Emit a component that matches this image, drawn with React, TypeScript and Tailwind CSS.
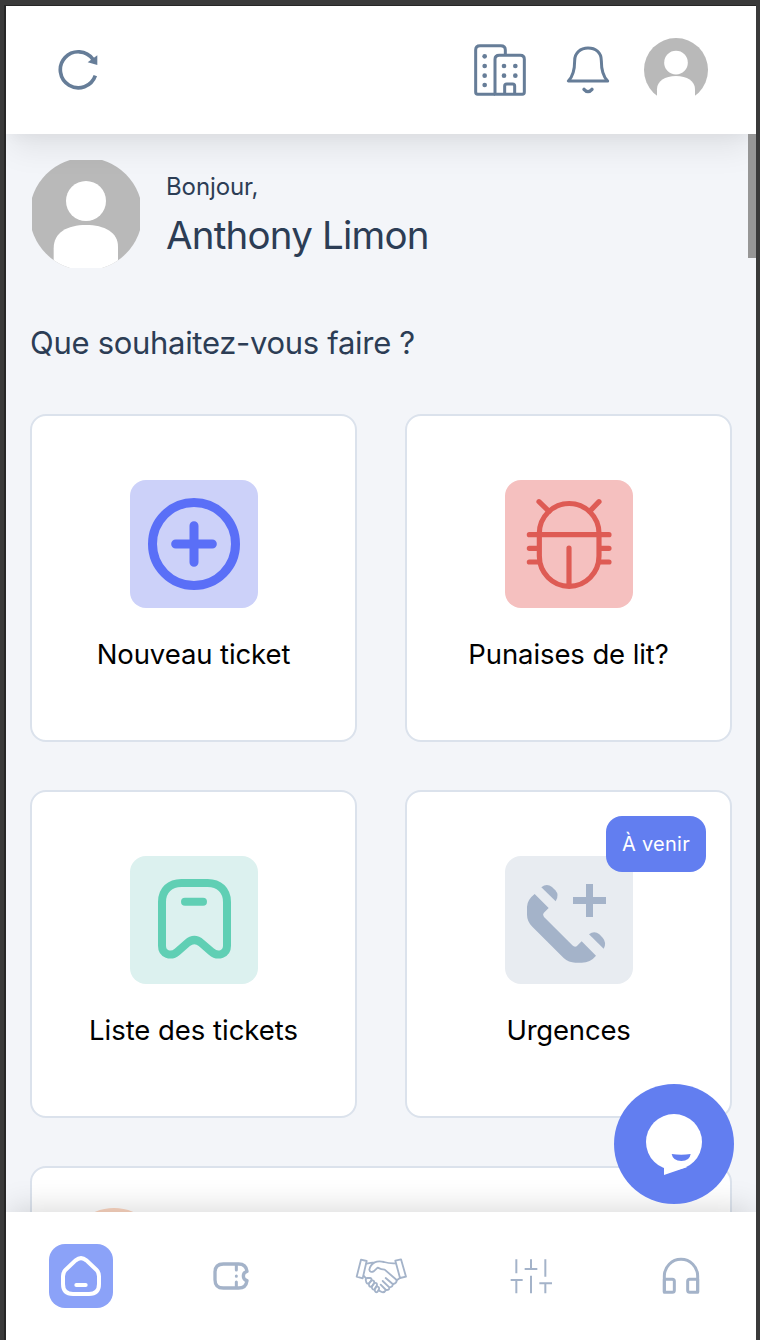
import type { ReactNode } from 'react';

function Art({ box, w, h, children }: { box: string; w: number; h: number; children: ReactNode }) {
  return (
    <svg viewBox={box} width={w} height={h} fill="none" className="block shrink-0" aria-hidden="true">
      {children}
    </svg>
  );
}

const RefreshIcon = () => (
  <Art box="174 147 120 126" w={40} h={42}>
    <path d="M286 227A54 54 0 1 1 279 178" stroke="#667d98" strokeWidth="11" />
    <path d="M292 166V195L263 187Z" fill="#667d98" />
  </Art>
);

const BuildingIcon = () => (
  <Art box="42 69 156 162" w={52} h={54}>
    <g stroke="#667d98" strokeWidth="9" strokeLinejoin="round">
      <path d="M136 103V90Q136 77 122 77H60Q47 77 47 90V216Q47 223 53 223H105" />
      <path d="M105 223V118Q105 106 118 106H181Q193 106 193 118V216Q193 223 187 223H105Z" />
      <path d="M134 223V198Q134 192 140 192H158Q164 192 164 198V223" />
    </g>
    <g fill="#667d98">
      <circle cx="74" cy="109" r="7" /><circle cx="74" cy="138" r="7" />
      <circle cx="74" cy="167" r="7" /><circle cx="74" cy="195" r="7" />
      <circle cx="132" cy="138" r="7" /><circle cx="166" cy="138" r="7" />
      <circle cx="132" cy="167" r="7" /><circle cx="166" cy="167" r="7" />
    </g>
  </Art>
);

const BellIcon = () => (
  <Art box="318 75 132 150" w={44} h={50}>
    <g stroke="#667d98" strokeWidth="9" strokeLinejoin="round">
      <path d="M325 183H443C430 170 424 152 424 122C424 96 406 84 384 84C362 84 344 98 344 122C344 152 338 170 325 183Z" />
      <path d="M372 208Q384 222 396 208" strokeWidth="10" strokeLinecap="round" />
    </g>
  </Art>
);

const HeaderAvatar = () => (
  <Art box="552 54 192 192" w={64} h={64}>
    <circle cx="648" cy="150" r="96" fill="#b9b9b9" />
    <circle cx="648" cy="128" r="35.5" fill="#fff" />
    <path d="M591 246V208C591 183 615 168 648 168S705 183 705 208V246Z" fill="#fff" />
  </Art>
);

const LargeAvatar = () => (
  <Art box="66 60 324 324" w={108} h={108}>
    <defs>
      <clipPath id="avatar-round"><circle cx="228" cy="222" r="169" /></clipPath>
    </defs>
    <g clipPath="url(#avatar-round)">
      <rect x="50" y="50" width="360" height="350" fill="#b9b9b9" />
      <circle cx="228" cy="183" r="60" fill="#fff" />
      <path d="M131 390V325C131 277 172 255 228 255S324 277 324 320V390Z" fill="#fff" />
    </g>
  </Art>
);

const PlusIcon = () => (
  <Art box="30 30 384 384" w={128} h={128}>
    <g stroke="#5a6ff7" strokeWidth="27" strokeLinecap="round">
      <circle cx="222" cy="222" r="124.5" />
      <path d="M167 222H277M222 167V277" />
    </g>
  </Art>
);

const BugIcon = () => (
  <Art box="30 30 384 384" w={128} h={128}>
    <g stroke="#de5b54" strokeWidth="15.5" strokeLinecap="round">
      <path d="M133 258V190A89.500 89.500 0 0 1 312 190V258A89.500 91 0 0 1 133 258Z" />
      <path d="M103 194H342M103 235H127M103 276H127M318 235H342M318 276H342M132 95L162 124M312 95L284 124M222 234V345" />
    </g>
  </Art>
);

const TicketsIcon = () => (
  <Art box="30 30 384 384" w={128} h={128}>
    <g stroke="#60cfb4" strokeWidth="24" strokeLinecap="round">
      <path d="M126 299V168C126 132 150 111 184 111H263C297 111 321 132 321 168V299C321 324 294 334 274 317L244 291C230 279 216 279 202 291L172 317C152 334 126 324 126 299Z" />
      <path d="M195 167H249" />
    </g>
  </Art>
);

const EmergencyIcon = () => (
  <Art box="30 150 384 384" w={128} h={128}>
    <g fill="#a4b3c9">
      <path d="M119 264L161 306L146 321Q142 326 147 333L232 418Q238 424 245 421L260 406L303 449Q286 470 260 470H241Q221 470 206 456L112 362Q96 346 96 326V302Q97 281 119 264Z" />
      <path d="M139 244Q155 230 171 243L181 253Q194 267 182 286Z" />
      <path d="M282 385Q298 372 313 385L323 395Q336 410 326 428Z" />
      <path d="M273 234H294V273H333V294H294V333H273V294H234V273H273Z" />
    </g>
  </Art>
);

const HomeIcon = () => (
  <Art box="147 282 192 192" w={64} h={64}>
    <g stroke="#fff" strokeWidth="12" strokeLinecap="round">
      <path d="M189 379Q189 367 197 359L227 331Q243 318 259 331L289 359Q297 367 297 379V402Q297 432 267 432H219Q189 432 189 402Z" />
      <path d="M229 405H257" />
    </g>
  </Art>
);

const TicketIcon = () => (
  <Art box="636 333 114 90" w={38} h={30}>
    <g stroke="#a4b3c9" strokeWidth="10" strokeLinecap="round" strokeLinejoin="round">
      <path d="M670 342H716Q738 342 741 364Q730 367 730 378T741 392Q738 414 716 414H670Q645 414 645 389V367Q645 342 670 342Z" />
      <path d="M709 344V360M709 378V378.500M709 396V412" strokeWidth="9" />
    </g>
  </Art>
);

const HandshakeIcon = () => (
  <Art box="45 81 156 114" w={52} h={38}>
    <g stroke="#a4b3c9" strokeWidth="5.500" strokeLinecap="round" strokeLinejoin="round">
      <path d="M63 89L80 93L68 145L50 140Z" />
      <path d="M166 92L183 88L198 140L180 144Z" />
      <path d="M80 101Q92 98 104 97M166 100Q148 101 132 96Q116 92 104 97Q91 104 88 119Q90 129 101 124L113 113Q124 119 134 119L170 150Q171 159 160 162" />
      <path d="M72 138L78 145M180 144L170 151" />
      <path d="M78 153Q75 146 82 144L90 144Q97 146 94 152L87 160Q79 163 78 153Z" />
      <path d="M87 160L94 152Q103 149 103 158L95 170Q85 172 87 160Z" />
      <path d="M95 170L103 159Q112 157 111 166L104 178Q96 181 95 170Z" />
      <path d="M104 178L110 169Q119 170 117 178L112 186Q106 189 104 180Z" />
      <path d="M137 144L158 162Q159 171 148 172L128 153M148 172Q149 181 138 180L122 164M138 180Q133 189 125 186L116 181" />
    </g>
  </Art>
);

const SlidersIcon = () => (
  <Art box="510 84 126 108" w={42} h={36}>
    <path
      d="M529 88V130M512 150H548M529 150V190M573 88V117M554 117H592M573 137V190M616 88V140M598 160H636M616 160V190"
      stroke="#a4b3c9"
      strokeWidth="6"
    />
  </Art>
);

const HeadphonesIcon = () => (
  <Art box="66 81 114 114" w={38} h={38}>
    <g stroke="#a4b3c9" strokeWidth="9" strokeLinejoin="round">
      <path d="M73 187V138A50 50 0 0 1 173 138V187" />
      <path d="M73 148H97Q103 148 103 154V181Q103 187 97 187H73ZM173 148H149Q143 148 143 154V181Q143 187 149 187H173Z" />
    </g>
  </Art>
);

function ActionCard({ icon, tile, label, labelClass, badge }: {
  icon: ReactNode; tile: string; label: string; labelClass: string; badge?: string;
}) {
  return (
    <button className="relative flex h-[328px] flex-col items-center rounded-[16px] border-2 border-[#dbe2ec] bg-white pt-16">
      <span className={`size-32 rounded-[16px] ${tile}`}>{icon}</span>
      <span className={`mt-[26px] whitespace-nowrap text-[27.5px] leading-10 text-black ${labelClass}`}>{label}</span>
      {badge && (
        <span className="absolute right-6 top-6 flex h-14 w-[100px] items-center justify-center rounded-[16px] bg-[#627ef0] text-[20px] tracking-[0.3px] text-white">
          {badge}
        </span>
      )}
    </button>
  );
}

export default function App() {
  return (
    <div className="h-[1340px] w-[760px] overflow-hidden bg-[#3a3a3a] pl-1 pr-1 pt-[5px] font-['Inter',sans-serif]">
      <div className="relative flex h-[1335px] flex-col overflow-hidden border-l-2 border-t border-[#262626] bg-[#f3f5f9]">
        <header className="relative z-10 flex h-32 shrink-0 items-center bg-white pl-[52px] pr-12 shadow-[0_20px_30px_-6px_rgba(0,0,0,0.08),0_8px_12px_-4px_rgba(0,0,0,0.03)]">
          <RefreshIcon />
          <div className="ml-auto flex items-center">
            <BuildingIcon />
            <div className="ml-10 mr-[34px]"><BellIcon /></div>
            <HeaderAvatar />
          </div>
        </header>

        <main className="min-h-0 flex-1 overflow-hidden px-6">
          <section className="flex pl-0.5 pt-[26px] text-[#2c3d55]">
            <LargeAvatar />
            <div className="ml-[26px] pt-[11px]">
              <p className="text-[24px] leading-8 tracking-[-0.1px]">Bonjour,</p>
              <h1 className="mt-2 text-[38.5px] leading-[48px] tracking-[-0.8px]">Anthony Limon</h1>
            </div>
          </section>
          <h2 className="mt-[55px] text-[31px] leading-10 tracking-[-0.3px] text-[#2c3d55]">Que souhaitez-vous faire ?</h2>
          <section className="mt-[51px] grid grid-cols-2 gap-12">
            <ActionCard icon={<PlusIcon />} tile="bg-[#ccd1f9]" label="Nouveau ticket" labelClass="tracking-[-0.1px]" />
            <ActionCard icon={<BugIcon />} tile="bg-[#f5c0bf]" label="Punaises de lit?" labelClass="tracking-[-0.1px]" />
            <ActionCard icon={<TicketsIcon />} tile="bg-[#dcf1ef]" label="Liste des tickets" labelClass="tracking-[-0.03px]" />
            <ActionCard icon={<EmergencyIcon />} tile="bg-[#e8ecf1]" label="Urgences" labelClass="tracking-[-0.2px]" badge="À venir" />
            <div className="col-span-2 h-60 rounded-[16px] border-2 border-[#dbe2ec] bg-white pl-[33px] pt-10">
              <div className="size-[98px] rounded-full bg-[#fbd5c0]" />
            </div>
          </section>
        </main>

        <div className="absolute right-0 top-32 z-20 h-[124px] w-2 bg-[#969696]" />

        <nav className="relative z-10 grid h-32 shrink-0 grid-cols-5 place-items-center bg-white shadow-[0_-6px_30px_-4px_rgba(0,0,0,0.16)]">
          <span className="rounded-[16px] bg-[#8ba2f8]"><HomeIcon /></span>
          <TicketIcon />
          <HandshakeIcon />
          <SlidersIcon />
          <HeadphonesIcon />
        </nav>

        <button className="absolute bottom-[136px] right-[22px] z-20" aria-label="Chat">
          <Art box="72 42 360 360" w={120} h={120}>
            <circle cx="252" cy="222" r="180" fill="#627ef0" />
            <circle cx="252" cy="216" r="84" fill="#fff" />
            <path d="M222 290V315L292 291Z" fill="#fff" />
            <path d="M245 252Q274 256 302 252Q299 273 274 273T245 252Z" fill="#627ef0" />
          </Art>
        </button>
      </div>
    </div>
  );
}
